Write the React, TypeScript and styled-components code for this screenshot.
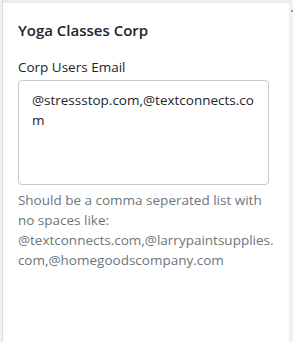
import styled, { createGlobalStyle } from "styled-components";

const Global = createGlobalStyle`
    html, body {
        margin: 0;
        padding: 0;
        background: #fff;
    }
    body {
        font-family: "Open Sans", "Noto Sans", "Liberation Sans", sans-serif;
        color: #212529;
    }
`;

const Page = styled.div`
    display: flex;
    width: 293px;
    height: 342px;
    overflow: hidden;
`;

const Gutter = styled.div`
    width: 3px;
    background: #f2f2f2;
    border-right: 1px solid #dcdcdc;
`;

const Panel = styled.section`
    flex: 1;
    display: flex;
    flex-direction: column;
    background: #fff;
    border-top: 3px solid #ececec;
    padding: 17px 15px 0 15px;
`;

const Scrollbar = styled.div`
    width: 7px;
    background: #f0f0f0;
    display: flex;
    justify-content: flex-end;
    padding-top: 10px;
`;

const Arrow = styled.span`
    width: 2px;
    height: 2px;
    background: #9a9a9a;
`;

const Title = styled.h5`
    margin: 0 0 17px 0;
    font-size: 15px;
    font-weight: 600;
    line-height: 20px;
    color: #212529;
`;

const Label = styled.label`
    display: block;
    font-size: 13.5px;
    line-height: 20px;
    margin-bottom: 3px;
`;

const Area = styled.textarea`
    box-sizing: border-box;
    width: 251px;
    height: 105px;
    padding: 9px 13px;
    border: 1px solid #c8c8c8;
    border-radius: 4px;
    font-family: inherit;
    font-size: 13.5px;
    line-height: 20px;
    color: #212529;
    resize: none;
    outline: none;
    overflow: hidden;
`;

const Help = styled.small`
    display: block;
    margin-top: 5px;
    font-size: 13.5px;
    line-height: 20px;
    color: #6c757d;
    white-space: nowrap;
`;

function App() {
    return (
        <>
            <Global />
            <Page>
                <Gutter />
                <Panel>
                    <Title>Yoga Classes Corp</Title>
                    <Label>Corp Users Email</Label>
                    <Area defaultValue="@stressstop.com,@textconnects.com" />
                    <Help>
                        Should be a comma seperated list with
                        <br />
                        no spaces like:
                        <br />
                        @textconnects.com,@larrypaintsupplies.
                        <br />
                        com,@homegoodscompany.com
                    </Help>
                </Panel>
                <Scrollbar>
                    <Arrow />
                </Scrollbar>
            </Page>
        </>
    );
}

export default App;
